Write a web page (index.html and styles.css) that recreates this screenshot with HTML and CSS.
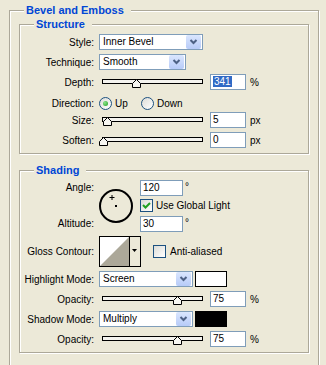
FILE: index.html
```html
<!DOCTYPE html>
<html lang="en">
<head>
    <meta charset="UTF-8">
    <title>Layer Style - Bevel and Emboss</title>
    <link rel="stylesheet" href="styles.css">
</head>
<body>
    <div class="group outer">
        <div class="group-title">Bevel and Emboss</div>

        <div class="group inner">
            <div class="group-title">Structure</div>
            <div class="rows">
                <div class="row">
                    <span class="label">Style:</span>
                    <div class="select select-style">
                        <span class="select-text">Inner Bevel</span>
                        <span class="select-btn"><svg width="15" height="14"><path d="M4.5 5 L7.5 8 L10.5 5" fill="none" stroke="#4d6185" stroke-width="2"/></svg></span>
                    </div>
                </div>
                <div class="row">
                    <span class="label">Technique:</span>
                    <div class="select select-technique">
                        <span class="select-text">Smooth</span>
                        <span class="select-btn"><svg width="15" height="14"><path d="M4.5 5 L7.5 8 L10.5 5" fill="none" stroke="#4d6185" stroke-width="2"/></svg></span>
                    </div>
                </div>
                <div class="row">
                    <span class="label">Depth:</span>
                    <div class="slider">
                        <div class="track"></div>
                        <svg class="thumb" style="left: 33px" width="9" height="9"><polygon points="4.5,0.5 8.5,4.5 8.5,8.5 0.5,8.5 0.5,4.5"/></svg>
                    </div>
                    <div class="field"><span class="sel">341</span></div>
                    <span class="unit">%</span>
                </div>
                <div class="row row-direction">
                    <span class="label">Direction:</span>
                    <div class="option option-up"><span class="radio on"></span><span class="option-text">Up</span></div>
                    <div class="option"><span class="radio"></span><span class="option-text">Down</span></div>
                </div>
                <div class="row">
                    <span class="label">Size:</span>
                    <div class="slider">
                        <div class="track"></div>
                        <svg class="thumb" style="left: 4px" width="9" height="9"><polygon points="4.5,0.5 8.5,4.5 8.5,8.5 0.5,8.5 0.5,4.5"/></svg>
                    </div>
                    <div class="field">5</div>
                    <span class="unit">px</span>
                </div>
                <div class="row">
                    <span class="label">Soften:</span>
                    <div class="slider">
                        <div class="track"></div>
                        <svg class="thumb" style="left: 0px" width="9" height="9"><polygon points="4.5,0.5 8.5,4.5 8.5,8.5 0.5,8.5 0.5,4.5"/></svg>
                    </div>
                    <div class="field">0</div>
                    <span class="unit">px</span>
                </div>
            </div>
        </div>

        <div class="group inner shading">
            <div class="group-title">Shading</div>
            <div class="rows">
                <div class="angle-block">
                    <div class="angle-labels">
                        <span class="label">Angle:</span>
                        <span class="label">Altitude:</span>
                    </div>
                    <svg class="dial" width="35" height="35">
                        <circle cx="17" cy="17" r="16" fill="none" stroke="#000" stroke-width="2"/>
                        <path d="M10.5 8.5 H15.5 M13 6 V11" stroke="#000" stroke-width="1"/>
                        <rect x="16" y="16" width="2" height="2" fill="#000"/>
                    </svg>
                    <div class="angle-fields">
                        <div class="field-line"><div class="field field-angle">120</div><span class="deg">°</span></div>
                        <div class="check-line">
                            <span class="check"><svg width="11" height="11"><path d="M2 5 L4.5 7.5 L9 3" fill="none" stroke="#21a121" stroke-width="2"/></svg></span>
                            <span class="check-text">Use Global Light</span>
                        </div>
                        <div class="field-line field-altitude"><div class="field field-angle">30</div><span class="deg">°</span></div>
                    </div>
                </div>
                <div class="row row-gloss">
                    <span class="label">Gloss Contour:</span>
                    <svg class="contour" width="42" height="31">
                        <rect x="0.5" y="0.5" width="41" height="30" fill="#ece9d8" stroke="#000"/>
                        <rect x="1" y="1" width="29" height="29" fill="#fff"/>
                        <polygon points="1,30 30,1 30,30" fill="#aca899"/>
                        <path d="M30.5 1 V30" stroke="#000"/>
                        <polygon points="33,13 38,13 35.5,16" fill="#000"/>
                    </svg>
                    <span class="check check-aa"></span>
                    <span class="check-text">Anti-aliased</span>
                </div>
                <div class="row">
                    <span class="label">Highlight Mode:</span>
                    <div class="select select-mode">
                        <span class="select-text">Screen</span>
                        <span class="select-btn"><svg width="15" height="14"><path d="M4.5 5 L7.5 8 L10.5 5" fill="none" stroke="#4d6185" stroke-width="2"/></svg></span>
                    </div>
                    <span class="swatch swatch-white"></span>
                </div>
                <div class="row">
                    <span class="label">Opacity:</span>
                    <div class="slider">
                        <div class="track"></div>
                        <svg class="thumb" style="left: 74px" width="9" height="9"><polygon points="4.5,0.5 8.5,4.5 8.5,8.5 0.5,8.5 0.5,4.5"/></svg>
                    </div>
                    <div class="field">75</div>
                    <span class="unit">%</span>
                </div>
                <div class="row">
                    <span class="label">Shadow Mode:</span>
                    <div class="select select-mode">
                        <span class="select-text">Multiply</span>
                        <span class="select-btn"><svg width="15" height="14"><path d="M4.5 5 L7.5 8 L10.5 5" fill="none" stroke="#4d6185" stroke-width="2"/></svg></span>
                    </div>
                    <span class="swatch swatch-black"></span>
                </div>
                <div class="row">
                    <span class="label">Opacity:</span>
                    <div class="slider">
                        <div class="track"></div>
                        <svg class="thumb" style="left: 74px" width="9" height="9"><polygon points="4.5,0.5 8.5,4.5 8.5,8.5 0.5,8.5 0.5,4.5"/></svg>
                    </div>
                    <div class="field">75</div>
                    <span class="unit">%</span>
                </div>
            </div>
        </div>
    </div>
</body>
</html>
```

FILE: styles.css
```css
html, body {
    overflow: hidden;
}

body {
    margin: 0;
    padding: 10px 0 0 9px;
    background-color: #ece9d8;
    font-family: 'Liberation Sans', Arial, sans-serif;
    font-size: 10px;
    color: #000;
}

.group {
    box-sizing: border-box;
    border: 1px solid #aca899;
    box-shadow: inset 1px 1px 0 #fff, 1px 1px 0 #fff;
}

.outer {
    width: 310px;
    padding-bottom: 30px;
}

.inner {
    margin: 7px 9px 0 9px;
    padding-bottom: 5px;
}

.shading {
    margin-top: 16px;
}

.group-title {
    width: fit-content;
    margin: -7px 0 0 14px;
    padding: 0 7px 0 2px;
    background-color: #ece9d8;
    color: #0046d5;
    font-size: 11px;
    font-weight: bold;
    line-height: 13px;
}

.rows {
    display: flex;
    flex-direction: column;
    gap: 4px;
    margin-top: 3px;
}

.row {
    display: flex;
    align-items: center;
    height: 16px;
}

.label {
    flex-shrink: 0;
    width: 74px;
    margin-right: 5px;
    text-align: right;
    line-height: 13px;
    white-space: nowrap;
}

/* dropdowns */
.select {
    display: flex;
    align-items: center;
    box-sizing: border-box;
    height: 16px;
    border: 1px solid #7f9db9;
    background-color: #fff;
}

.select-style { width: 104px; }
.select-technique { width: 87px; }
.select-mode { width: 94px; }

.select-text {
    flex: 1;
    padding-left: 3px;
    line-height: 14px;
}

.select-btn {
    display: block;
    width: 15px;
    height: 14px;
    margin-right: 1px;
    border-radius: 2px;
    background: linear-gradient(#dae6fe, #b7cbf8);
}

.select-btn svg {
    display: block;
}

/* sliders */
.slider {
    position: relative;
    flex-shrink: 0;
    width: 111px;
    height: 16px;
}

.track {
    box-sizing: border-box;
    width: 101px;
    height: 5px;
    margin: 5px 0 0 3px;
    border: 1px solid #000;
    background-color: #f4f3ee;
}

.thumb {
    position: absolute;
    top: 5px;
    display: block;
}

.thumb polygon {
    fill: #f7f6f1;
    stroke: #000;
    stroke-width: 1;
}

.field {
    flex-shrink: 0;
    box-sizing: border-box;
    width: 36px;
    height: 16px;
    padding-left: 2px;
    border: 1px solid #7f9db9;
    background-color: #fff;
    line-height: 14px;
}

.sel {
    padding: 0 1px;
    background-color: #316ac5;
    color: #fff;
}

.unit {
    margin-left: 4px;
}

/* radios */
.row-direction {
    align-items: flex-end;
    margin-bottom: -2px;
}

.option {
    display: flex;
    align-items: center;
    height: 13px;
}

.option-up {
    width: 42px;
}

.radio {
    box-sizing: border-box;
    display: flex;
    align-items: center;
    justify-content: center;
    width: 13px;
    height: 13px;
    border: 1px solid #1c5180;
    border-radius: 50%;
    background: linear-gradient(135deg, #dcdcd7, #fff);
}

.radio.on::after {
    content: "";
    width: 5px;
    height: 5px;
    border-radius: 50%;
    background: radial-gradient(circle at 35% 35%, #8ae38a, #21a121);
}

.option-text {
    margin-left: 3px;
    line-height: 13px;
}

/* checkboxes */
.check {
    box-sizing: border-box;
    display: block;
    flex-shrink: 0;
    width: 13px;
    height: 13px;
    border: 1px solid #1c5180;
    background: linear-gradient(135deg, #dcdcd7, #fff);
}

.check svg {
    display: block;
}

.check-text {
    margin-left: 3px;
    line-height: 13px;
    white-space: nowrap;
}

/* angle / altitude */
.angle-block {
    display: flex;
    height: 52px;
}

.angle-labels {
    display: flex;
    flex-direction: column;
    justify-content: space-between;
}

.angle-labels .label {
    line-height: 16px;
}

.dial {
    align-self: center;
    flex-shrink: 0;
    width: 35px;
    margin-right: 6px;
}

.angle-fields {
    display: flex;
    flex-direction: column;
}

.field-line {
    display: flex;
    height: 16px;
}

.field-angle {
    width: 43px;
}

.deg {
    margin-left: 2px;
    line-height: 14px;
}

.check-line {
    display: flex;
    align-items: center;
    height: 13px;
    margin-top: 3px;
}

.field-altitude {
    margin-top: 4px;
}

.row-gloss {
    height: 31px;
}

.contour {
    display: block;
    flex-shrink: 0;
}

.check-aa {
    margin-left: 12px;
}

.check-aa + .check-text {
    margin-left: 4px;
}

.swatch {
    box-sizing: border-box;
    width: 32px;
    height: 16px;
    margin-left: 2px;
    border: 1px solid #000;
}

.swatch-white { background-color: #fff; }
.swatch-black { background-color: #000; }
```
